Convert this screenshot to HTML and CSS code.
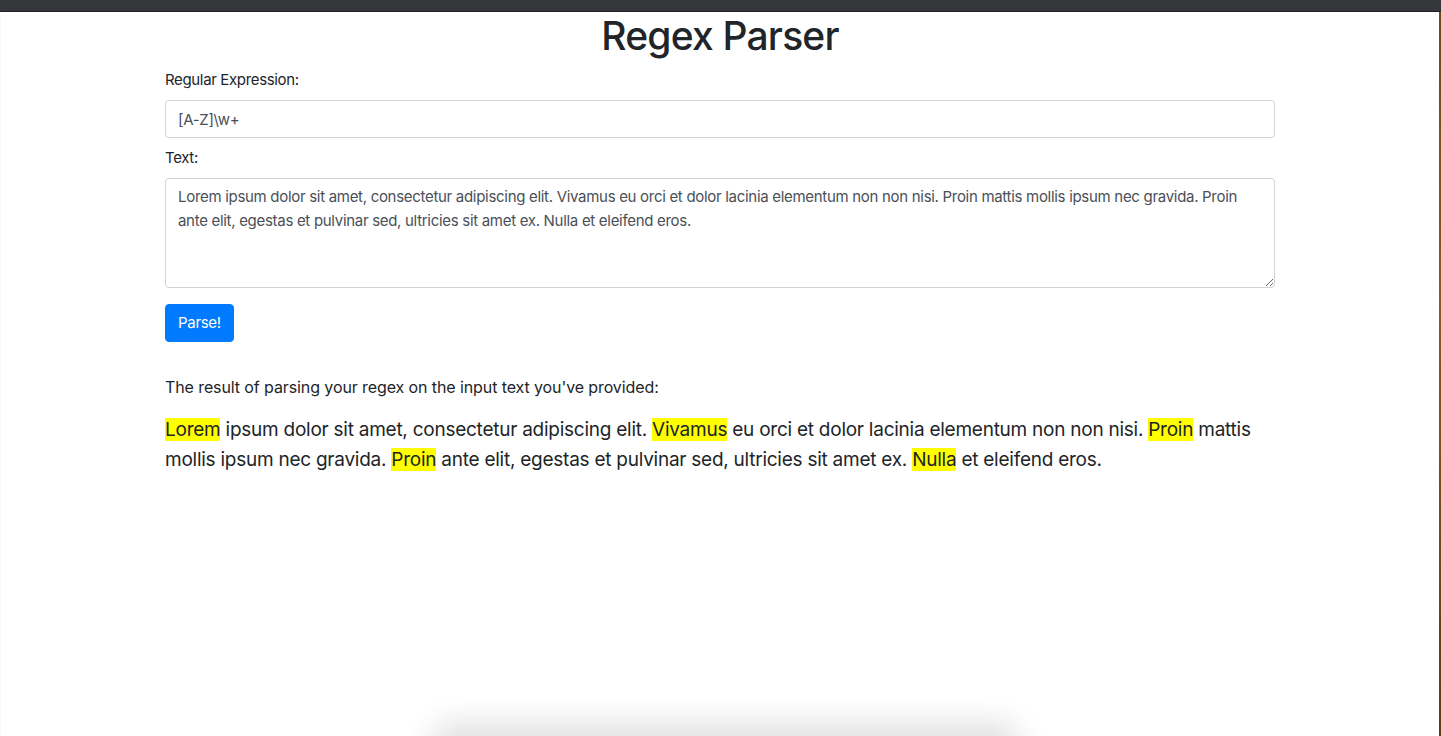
FILE: index.html
```html
<!DOCTYPE html>
<html lang="en">
<head>
<meta charset="utf-8">
<title>Regex Parser</title>
<link rel="stylesheet" href="styles.css">
</head>
<body>
<div class="topbar"></div>
<div class="frame">
  <main class="page">
    <div class="container">
      <h1 class="title">Regex Parser</h1>
      <form class="form">
        <div class="form-group">
          <label class="label" for="regex">Regular Expression:</label>
          <input class="control" id="regex" type="text" value="[A-Z]\w+">
        </div>
        <div class="form-group">
          <label class="label" for="text">Text:</label>
          <textarea class="control area" id="text" rows="4">Lorem ipsum dolor sit amet, consectetur adipiscing elit. Vivamus eu orci et dolor lacinia elementum non non nisi. Proin mattis mollis ipsum nec gravida. Proin ante elit, egestas et pulvinar sed, ultricies sit amet ex. Nulla et eleifend eros.</textarea>
        </div>
        <button class="btn" type="button">Parse!</button>
      </form>
      <p class="result-label">The result of parsing your regex on the input text you've provided:</p>
      <p class="lead"><span class="hl">Lorem</span> ipsum dolor sit amet, consectetur adipiscing elit. <span class="hl">Vivamus</span> eu orci et dolor lacinia elementum non non nisi. <span class="hl">Proin</span> mattis mollis ipsum nec gravida. <span class="hl">Proin</span> ante elit, egestas et pulvinar sed, ultricies sit amet ex. <span class="hl">Nulla</span> et eleifend eros.</p>
    </div>
    <div class="dock-shadow"></div>
  </main>
  <div class="edge"></div>
</div>
</body>
</html>
```
FILE: styles.css
```css
* { box-sizing: border-box; }
html, body { margin: 0; padding: 0; height: 100%; }
body {
  font-family: Inter, "Noto Sans", "Liberation Sans", sans-serif;
  color: #212529;
  background: #fff;
  font-size: 16px;
  line-height: 1.5;
  display: flex;
  flex-direction: column;
  overflow: hidden;
}
.topbar {
  height: 12px;
  flex: none;
  background: #35363a;
  border-bottom: 1px solid #202124;
}
.frame {
  flex: 1;
  display: flex;
  min-height: 0;
}
.page {
  flex: 1;
  position: relative;
  border-left: 1px solid #fafafa;
}
.edge {
  width: 2px;
  flex: none;
  background: linear-gradient(to bottom, #6b4a1e, #8a5a22 40%, #5a3c18);
}
.container {
  width: 1110px;
  margin: 0 auto;
}
.title {
  margin: 0 0 8px;
  height: 48px;
  font-size: 39px;
  font-weight: 500;
  line-height: 48px;
  text-align: center;
  letter-spacing: -0.8px;
}
.form-group { margin-bottom: 8px; }
.label {
  display: block;
  margin-bottom: 8px;
  font-size: 15px;
  line-height: 24px;
  letter-spacing: -0.35px;
}
.control {
  display: block;
  width: 100%;
  height: 38px;
  padding: 6px 12px;
  font-family: inherit;
  font-size: 15px;
  line-height: 24px;
  letter-spacing: -0.3px;
  color: #495057;
  background: #fff;
  border: 1px solid #ced4da;
  border-radius: 4px;
}
.area {
  height: 110px;
  resize: vertical;
}
.form .form-group:last-of-type { margin-bottom: 16px; }
.btn {
  display: block;
  height: 38px;
  padding: 6px 12px;
  font-family: inherit;
  font-size: 15px;
  line-height: 24px;
  letter-spacing: -0.3px;
  color: #fff;
  background: #007bff;
  border: 1px solid #007bff;
  border-radius: 4px;
}
.result-label {
  margin: 33px 0 16px;
  font-size: 16px;
  line-height: 24px;
  letter-spacing: -0.1px;
}
.lead {
  margin: 0;
  font-size: 19px;
  font-weight: 400;
  line-height: 30px;
  letter-spacing: -0.25px;
}
.hl { background: #ffff00; }
.dock-shadow {
  position: absolute;
  left: 440px;
  width: 570px;
  bottom: -30px;
  height: 30px;
  border-radius: 20px;
  box-shadow: 0 -4px 30px 10px rgba(0,0,0,0.12);
}
```
